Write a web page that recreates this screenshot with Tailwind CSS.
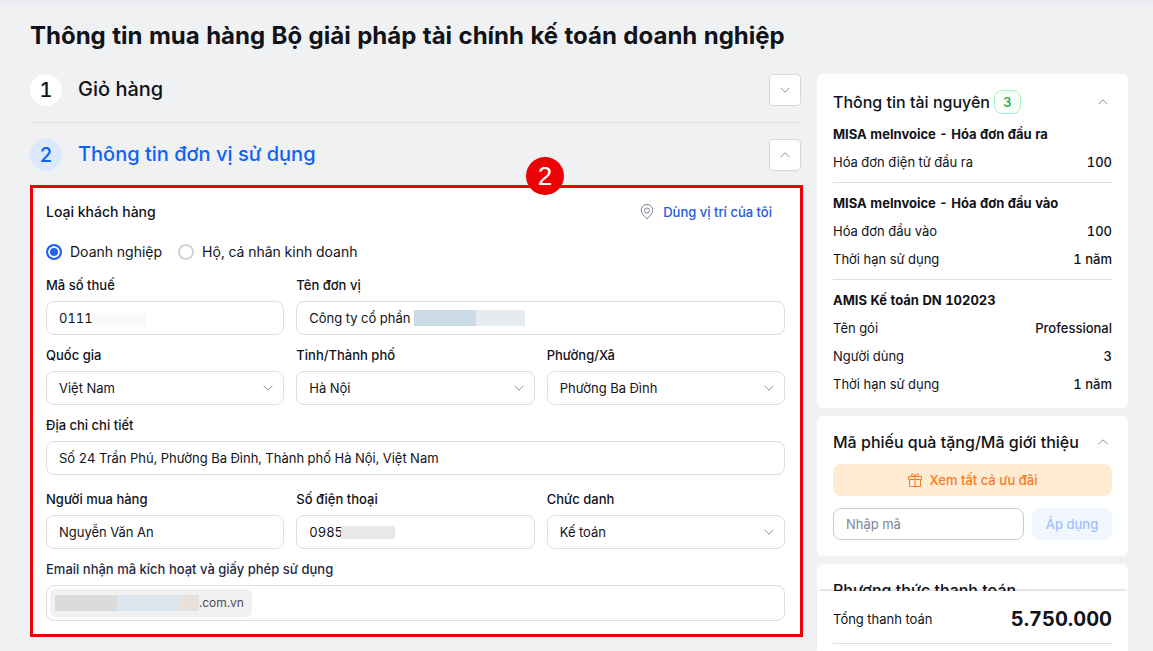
<!DOCTYPE html>
<html lang="vi">
<head>
    <meta charset="UTF-8">
    <meta name="viewport" content="width=device-width, initial-scale=1.0">
    <title>Thông tin mua hàng</title>
    <script src="https://cdn.jsdelivr.net/npm/@tailwindcss/browser@4"></script>
</head>
<body class="h-screen overflow-hidden bg-[#f0f1f3] font-['Inter','Noto_Sans',sans-serif] text-[13px] leading-5 text-[#111319] tabular-nums">
    <!-- Shared icons -->
    <svg class="hidden">
        <symbol id="chevron-down" viewBox="0 0 10 6"><path d="M.5 .7 5 5.2 9.5 .7" fill="none" stroke="currentColor" stroke-width=".8"/></symbol>
        <symbol id="chevron-up" viewBox="0 0 10 6"><path d="M.5 5.3 5 .8 9.5 5.3" fill="none" stroke="currentColor" stroke-width=".8"/></symbol>
    </svg>

    <div class="flex h-full flex-col bg-linear-to-b from-[#e8e9ec] to-[#f0f1f3] to-[8px] pt-[18px] pr-[25px] pl-[30px]">
        <h1 class="text-2xl leading-9 font-bold">Thông tin mua hàng Bộ giải pháp tài chính kế toán doanh nghiệp</h1>

        <div class="mt-5 flex min-h-0 flex-1 gap-4">
            <main class="min-w-0 flex-1">
                <!-- Step 1 -->
                <section class="flex items-start border-b border-[#dcdee2] pb-4">
                    <span class="flex size-8 items-center justify-center rounded-full bg-white text-xl font-medium">1</span>
                    <h2 class="ml-4 flex-1 text-xl leading-[30px] font-medium">Giỏ hàng</h2>
                    <button type="button" aria-label="Mở rộng" class="flex size-8 items-center justify-center rounded border border-[#d5d7db] bg-white text-[#6b7280]">
                        <svg class="h-1.5 w-2.5"><use href="#chevron-down"/></svg>
                    </button>
                </section>

                <!-- Step 2 -->
                <section class="flex items-start pt-4">
                    <span class="flex size-8 items-center justify-center rounded-full bg-[#dbe8fe] text-xl font-medium text-[#0b63f8]">2</span>
                    <h2 class="ml-4 flex-1 text-xl leading-[30px] font-medium text-[#0b63f8]">Thông tin đơn vị sử dụng</h2>
                    <button type="button" aria-label="Thu gọn" class="flex size-8 items-center justify-center rounded border border-[#d5d7db] bg-white text-[#6b7280]">
                        <svg class="h-1.5 w-2.5"><use href="#chevron-up"/></svg>
                    </button>
                </section>

                <form class="relative mt-3.5 -mr-0.5 border-3 border-[#ec0205] bg-white pt-3.5 pr-[15px] pb-[13px] pl-[13px]">
                    <span class="absolute -top-[31px] left-[493px] flex size-[38px] items-center justify-center rounded-full bg-[#ec0205] font-['Liberation_Sans',sans-serif] text-[26px] text-white">2</span>

                    <div class="flex items-center justify-between pr-[13px]">
                        <h3 class="text-sm leading-5 font-medium">Loại khách hàng</h3>
                        <a href="#" class="flex items-center gap-2 font-medium text-[#2459e0]">
                            <svg class="size-4 text-[#7b8190]" viewBox="0 0 16 16" fill="none" stroke="currentColor"><path d="M8 15C5.5 12.2 2.2 9.3 2.2 6.3a5.8 5.8 0 0 1 11.6 0C13.800 9.300 10.500 12.200 8 15Z"/><circle cx="8" cy="6.500" r="2.500"/></svg>
                            Dùng vị trí của tôi
                        </a>
                    </div>

                    <div class="mt-5 flex gap-4 text-sm leading-5">
                        <label class="flex items-center gap-2">
                            <input type="radio" name="type" checked class="size-4 appearance-none rounded-full border-2 border-[#2563eb] bg-[#2563eb] shadow-[inset_0_0_0_2px_#fff]">
                            Doanh nghiệp
                        </label>
                        <label class="flex items-center gap-2">
                            <input type="radio" name="type" class="size-4 appearance-none rounded-full border-2 border-[#d1d4da] bg-white">
                            Hộ, cá nhân kinh doanh
                        </label>
                    </div>

                    <div class="mt-[13px] grid grid-cols-3 gap-x-3 gap-y-2.5">
                        <div>
                            <label for="tax" class="mb-1.5 block font-medium">Mã số thuế</label>
                            <div class="relative">
                                <input id="tax" value="0111" class="block h-[34px] w-full rounded-lg border border-[#dcdee2] bg-white px-3">
                                <span class="absolute top-3 left-[46px] h-3 w-[54px] bg-[#f8f9f9]"></span>
                            </div>
                        </div>
                        <div class="col-span-2">
                            <label for="company" class="mb-1.5 block font-medium">Tên đơn vị</label>
                            <div class="relative">
                                <input id="company" value="Công ty cổ phần" class="block h-[34px] w-full rounded-lg border border-[#dcdee2] bg-white px-3">
                                <span class="absolute top-[9px] left-[118px] flex h-4 w-[111px] bg-[#e7ebf0]"><span class="w-[62px] bg-[#cbdbe6]"></span></span>
                            </div>
                        </div>
                        <div>
                            <label for="country" class="mb-1.5 block font-medium">Quốc gia</label>
                            <div class="relative">
                                <select id="country" class="block h-[34px] w-full appearance-none rounded-lg border border-[#dcdee2] bg-white px-3"><option>Việt Nam</option></select>
                                <svg class="pointer-events-none absolute top-3.5 right-[11px] h-1.5 w-2.5 text-[#6b7280]"><use href="#chevron-down"/></svg>
                            </div>
                        </div>
                        <div>
                            <label for="city" class="mb-1.5 block font-medium">Tỉnh/Thành phố</label>
                            <div class="relative">
                                <select id="city" class="block h-[34px] w-full appearance-none rounded-lg border border-[#dcdee2] bg-white px-3"><option>Hà Nội</option></select>
                                <svg class="pointer-events-none absolute top-3.5 right-[11px] h-1.5 w-2.5 text-[#6b7280]"><use href="#chevron-down"/></svg>
                            </div>
                        </div>
                        <div>
                            <label for="ward" class="mb-1.5 block font-medium">Phường/Xã</label>
                            <div class="relative">
                                <select id="ward" class="block h-[34px] w-full appearance-none rounded-lg border border-[#dcdee2] bg-white px-3"><option>Phường Ba Đình</option></select>
                                <svg class="pointer-events-none absolute top-3.5 right-[11px] h-1.5 w-2.5 text-[#6b7280]"><use href="#chevron-down"/></svg>
                            </div>
                        </div>
                        <div class="col-span-3">
                            <label for="address" class="mb-1.5 block font-medium">Địa chỉ chi tiết</label>
                            <input id="address" value="Số 24 Trần Phú, Phường Ba Đình, Thành phố Hà Nội, Việt Nam" class="block h-[34px] w-full rounded-lg border border-[#dcdee2] bg-white px-3">
                        </div>
                    </div>

                    <div class="mt-3.5 grid grid-cols-3 gap-x-3 gap-y-2.5">
                        <div>
                            <label for="buyer" class="mb-1.5 block font-medium">Người mua hàng</label>
                            <input id="buyer" value="Nguyễn Văn An" class="block h-[34px] w-full rounded-lg border border-[#dcdee2] bg-white px-3">
                        </div>
                        <div>
                            <label for="phone" class="mb-1.5 block font-medium">Số điện thoại</label>
                            <div class="relative">
                                <input id="phone" type="tel" value="0985" class="block h-[34px] w-full rounded-lg border border-[#dcdee2] bg-white px-3">
                                <span class="absolute top-[11px] left-[45px] h-[13px] w-[54px] bg-[#e8e8e9]"></span>
                            </div>
                        </div>
                        <div>
                            <label for="role" class="mb-1.5 block font-medium">Chức danh</label>
                            <div class="relative">
                                <select id="role" class="block h-[34px] w-full appearance-none rounded-lg border border-[#dcdee2] bg-white px-3"><option>Kế toán</option></select>
                                <svg class="pointer-events-none absolute top-3.5 right-[11px] h-1.5 w-2.5 text-[#6b7280]"><use href="#chevron-down"/></svg>
                            </div>
                        </div>
                        <div class="col-span-3">
                            <label for="email" class="mb-1.5 block font-medium text-[#1f2a44]">Email nhận mã kích hoạt và giấy phép sử dụng</label>
                            <div class="flex h-9 items-center rounded-lg border border-[#dcdee2] bg-white px-[3px]">
                                <span class="flex h-7 items-center rounded-md bg-[#f1f1f2] pr-2 pl-[5px] text-xs text-[#4b4e57]">
                                    <span class="flex h-4">
                                        <span class="w-[62px] bg-[#dadcdc]"></span>
                                        <span class="w-[62px] bg-[#dde6ee]"></span>
                                        <span class="w-5 bg-[#e8e0da]"></span>
                                    </span>
                                    .com.vn
                                </span>
                                <input id="email" type="email" class="ml-2 h-7 min-w-0 flex-1 bg-transparent outline-none">
                            </div>
                        </div>
                    </div>
                </form>
            </main>

            <!-- Order summary -->
            <aside class="flex w-[311px] shrink-0 flex-col">
                <div class="flex min-h-0 flex-1 flex-col gap-2 overflow-hidden">
                    <section class="shrink-0 rounded-md bg-white px-4 pt-4 pb-2.5">
                        <div class="mb-1.5 flex items-center">
                            <h3 class="text-base leading-6 font-medium">Thông tin tài nguyên</h3>
                            <span class="ml-1 flex h-6 w-[27px] items-center justify-center rounded-lg border border-[#a7f0c4] bg-[#f8fffa] font-medium text-[#16a34a]">3</span>
                            <button type="button" aria-label="Thu gọn" class="mr-1 ml-auto text-[#6b7280]"><svg class="h-1.5 w-2.5"><use href="#chevron-up"/></svg></button>
                        </div>
                        <div class="border-b border-[#dcdee2] pb-1.5 leading-7">
                            <h4 class="font-bold">MISA meInvoice - Hóa đơn đầu ra</h4>
                            <p class="flex justify-between"><span>Hóa đơn điện tử đầu ra</span><span class="font-medium">100</span></p>
                        </div>
                        <div class="border-b border-[#dcdee2] py-1.5 leading-7">
                            <h4 class="font-bold">MISA meInvoice - Hóa đơn đầu vào</h4>
                            <p class="flex justify-between"><span>Hóa đơn đầu vào</span><span class="font-medium">100</span></p>
                            <p class="flex justify-between"><span>Thời hạn sử dụng</span><span class="font-medium">1 năm</span></p>
                        </div>
                        <div class="pt-1.5 leading-7">
                            <h4 class="font-bold">AMIS Kế toán DN 102023</h4>
                            <p class="flex justify-between"><span>Tên gói</span><span class="font-medium">Professional</span></p>
                            <p class="flex justify-between"><span>Người dùng</span><span class="font-medium">3</span></p>
                            <p class="flex justify-between"><span>Thời hạn sử dụng</span><span class="font-medium">1 năm</span></p>
                        </div>
                    </section>

                    <section class="shrink-0 rounded-md bg-white p-4">
                        <div class="mb-3 flex items-center justify-between">
                            <h3 class="text-base leading-5 font-medium">Mã phiếu quà tặng/Mã giới thiệu</h3>
                            <button type="button" aria-label="Thu gọn" class="mr-1 text-[#6b7280]"><svg class="h-1.5 w-2.5"><use href="#chevron-up"/></svg></button>
                        </div>
                        <button type="button" class="flex h-8 w-full items-center justify-center gap-2 rounded-lg bg-[#ffecd2] font-medium text-[#fb7a1e]">
                            <svg class="size-[14px]" viewBox="0 0 14 14" fill="none" stroke="currentColor"><path d="M.5 3.500h13v3H.5zM1.500 6.500v7h11v-7M7 3.500v10M7 3.500C5.500 0 3.500 0 3.500 1.700 3.500 2.900 4.500 3.500 7 3.500ZM7 3.500C8.500 0 10.500 0 10.500 1.700 10.500 2.900 9.500 3.500 7 3.500Z"/></svg>
                            Xem tất cả ưu đãi
                        </button>
                        <div class="mt-3 flex gap-2">
                            <input aria-label="Nhập mã" placeholder="Nhập mã" class="h-8 min-w-0 flex-1 rounded-lg border border-[#c9cbd0] px-3 placeholder:text-[#7e8493]">
                            <button type="button" disabled class="h-8 w-20 rounded-lg bg-[#f1f6ff] font-medium text-[#9fc3fb]">Áp dụng</button>
                        </div>
                    </section>

                    <section class="shrink-0 rounded-md bg-white p-4">
                        <h3 class="text-base leading-5 font-medium">Phương thức thanh toán</h3>
                    </section>
                </div>

                <footer class="relative shrink-0 bg-white px-4 pt-3.5 pb-[7px] shadow-[0_-3px_3px_-2px_rgba(0,0,0,0.2)]">
                    <div class="flex items-center justify-between border-b border-[#dcdee2] pb-2.5">
                        <span>Tổng thanh toán</span>
                        <strong class="text-xl leading-7 font-bold">5.750.000</strong>
                    </div>
                </footer>
            </aside>
        </div>
    </div>
</body>
</html>
